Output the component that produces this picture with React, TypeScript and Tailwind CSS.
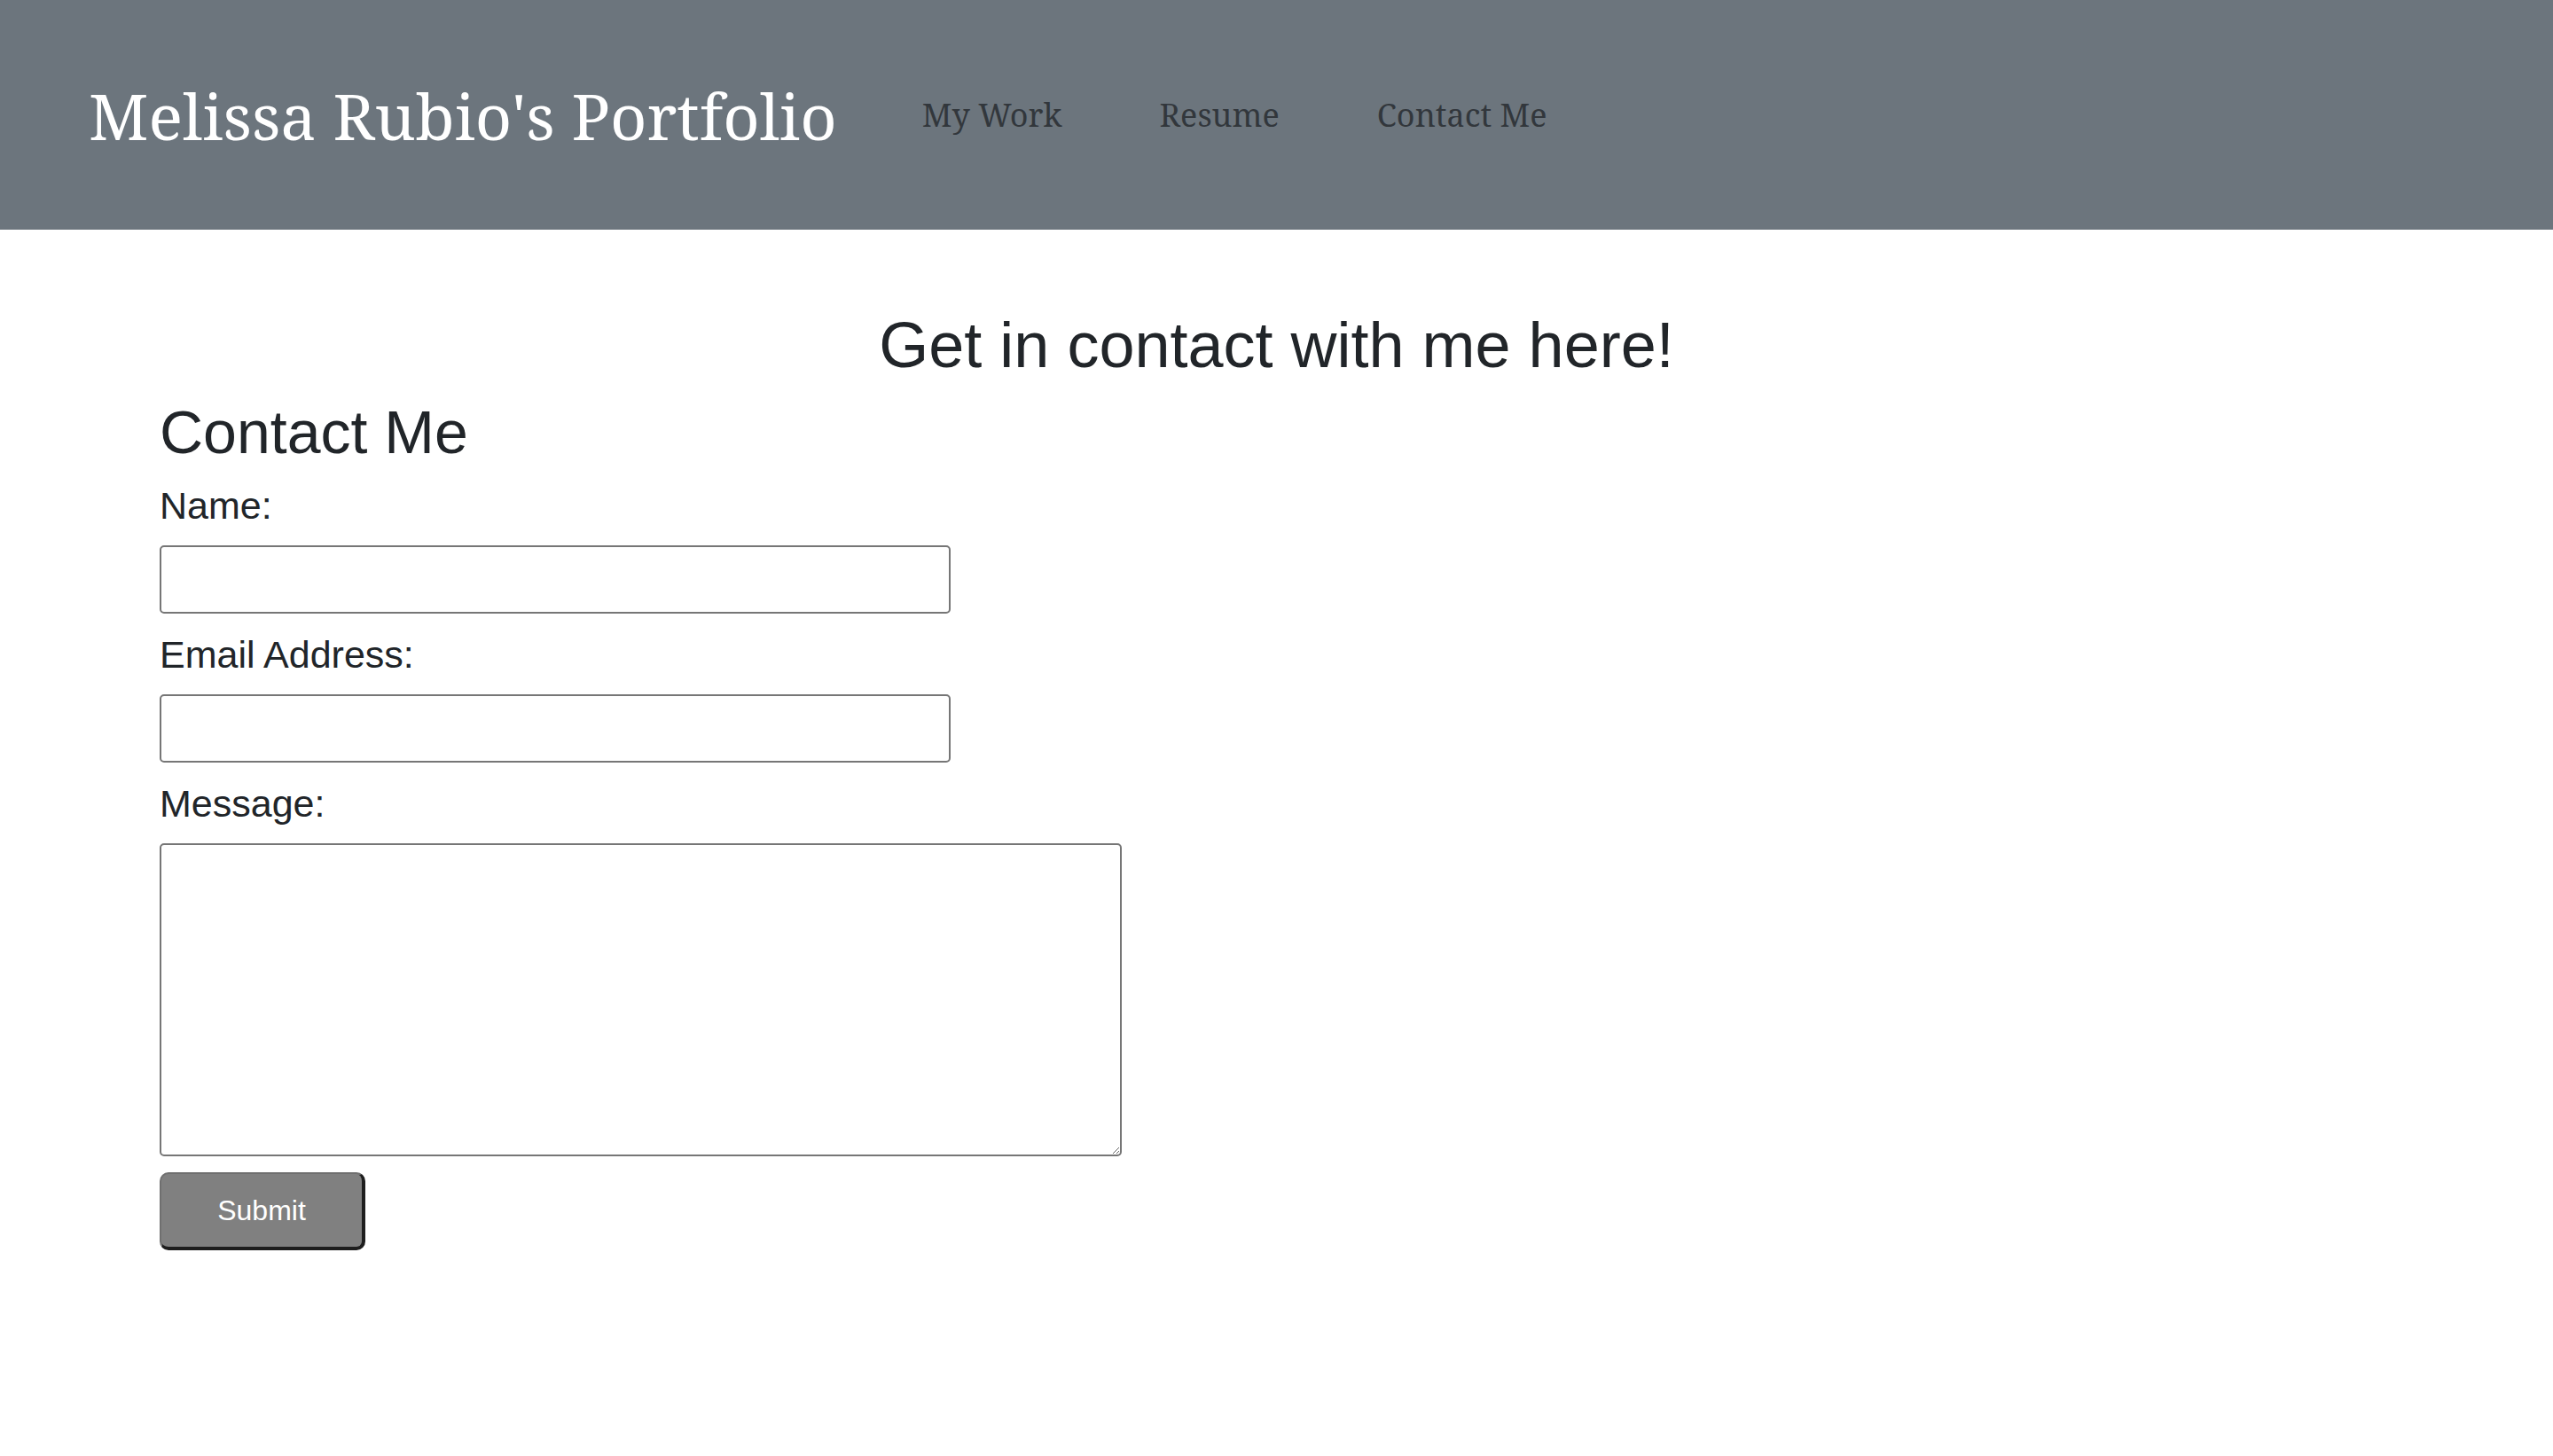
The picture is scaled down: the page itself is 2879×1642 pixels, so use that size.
import { useState } from "react";

const serif = "font-['Noto_Serif','DejaVu_Serif',serif]";
const sans = "font-['Liberation_Sans',Arial,sans-serif]";

const navLinks = ["My Work", "Resume", "Contact Me"];

const Header = () => (
  <header className={`flex h-[259px] items-center bg-[#6c757d] pl-[100px] ${serif}`}>
    <h1 className="text-[72px] leading-none text-white">Melissa Rubio's Portfolio</h1>
    <nav className="ml-[96px] flex gap-[110px]">
      {navLinks.map((link) => (
        <a key={link} href="#" className="text-[36px] leading-none text-[#32373c]">
          {link}
        </a>
      ))}
    </nav>
  </header>
);

const Field = ({ label, children }: { label: string; children: React.ReactNode }) => (
  <div className="mt-[21px] first:mt-0">
    <label className="block h-[50px] text-[43px] leading-[50px]">{label}</label>
    <div className="mt-[20px]">{children}</div>
  </div>
);

export default function App() {
  const [name, setName] = useState("");
  const [email, setEmail] = useState("");
  const [message, setMessage] = useState("");

  return (
    <div className={`min-h-screen bg-white text-[#212529] ${sans}`}>
      <Header />
      <main>
        <h2 className="mt-[87px] text-center text-[72px] leading-[1.2]">
          Get in contact with me here!
        </h2>
        <section className="px-[180px]">
          <h3 className="mt-[15px] text-[68px] leading-[1.2]">Contact Me</h3>
          <form className="mt-[16px]" onSubmit={(e) => e.preventDefault()}>
            <Field label="Name:">
              <input
                type="text"
                value={name}
                onChange={(e) => setName(e.target.value)}
                className="block h-[77px] w-[892px] rounded-[5px] border-2 border-[#767676] bg-white px-3 text-[32px]"
              />
            </Field>
            <Field label="Email Address:">
              <input
                type="email"
                value={email}
                onChange={(e) => setEmail(e.target.value)}
                className="block h-[77px] w-[892px] rounded-[5px] border-2 border-[#767676] bg-white px-3 text-[32px]"
              />
            </Field>
            <Field label="Message:">
              <textarea
                value={message}
                onChange={(e) => setMessage(e.target.value)}
                className="block h-[353px] w-[1085px] resize rounded-[5px] border-2 border-[#767676] bg-white p-3 text-[32px]"
              />
            </Field>
            <button
              type="submit"
              className="mt-[18px] block h-[88px] w-[232px] rounded-[10px] border-2 border-t-[#6f6f6f] border-l-[#6f6f6f] border-r-[#1e1e1e] border-b-[#1e1e1e] border-b-4 border-r-4 bg-[#808080] text-[32px] text-white"
            >
              Submit
            </button>
          </form>
        </section>
      </main>
    </div>
  );
}
